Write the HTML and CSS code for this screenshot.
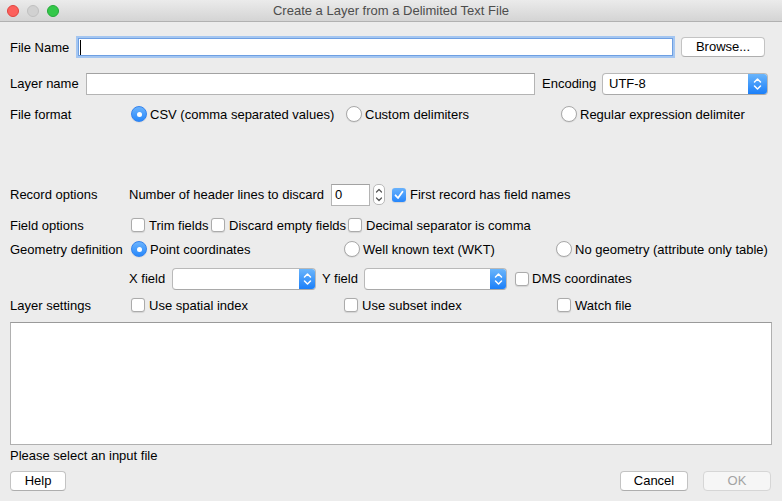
FILE: index.html
```html
<!DOCTYPE html>
<html>
<head>
<meta charset="utf-8">
<link rel="stylesheet" href="styles.css">
</head>
<body>
<div class="window">
  <div class="titlebar">
    <div class="lights">
      <span class="light red"></span>
      <span class="light gray"></span>
      <span class="light green"></span>
    </div>
    <div class="title">Create a Layer from a Delimited Text File</div>
  </div>

  <div class="content">
    <div class="row r1">
      <span class="lbl" style="width:68px">File Name</span>
      <div class="input focus fname"><span class="caret"></span></div>
      <button class="btn browse">Browse...</button>
    </div>

    <div class="row r2">
      <span class="lbl" style="width:76px">Layer name</span>
      <div class="input lname"></div>
      <span class="lbl enc">Encoding</span>
      <div class="combo encsel">
        <span class="combo-text">UTF-8</span>
        <span class="combo-arrow"><svg width="9" height="14" viewBox="0 0 9 14"><path d="M1.5 5 L4.5 2 L7.5 5 M1.5 9 L4.5 12 L7.5 9" fill="none" stroke="#fff" stroke-width="1.5" stroke-linecap="round" stroke-linejoin="round"/></svg></span>
      </div>
    </div>

    <div class="row r3">
      <span class="lbl" style="width:121px">File format</span>
      <span class="opt" style="width:215px"><span class="radio on"></span>CSV (comma separated values)</span>
      <span class="opt" style="width:215px"><span class="radio"></span>Custom delimiters</span>
      <span class="opt"><span class="radio"></span>Regular expression delimiter</span>
    </div>

    <div class="row r4">
      <span class="lbl" style="width:119px">Record options</span>
      <span class="lbl" style="width:202px">Number of header lines to discard</span>
      <div class="input spin">0</div>
      <span class="stepper"><svg width="10" height="18" viewBox="0 0 10 18"><path d="M2.5 6 L5 3.5 L7.5 6 M2.5 12 L5 14.5 L7.5 12" fill="none" stroke="#555" stroke-width="1.2" stroke-linecap="round" stroke-linejoin="round"/></svg></span>
      <span class="opt first"><span class="check on"><svg width="14" height="14" viewBox="0 0 14 14"><path d="M3.5 7.3 L6 10 L10.5 3.8" fill="none" stroke="#fff" stroke-width="1.8" stroke-linecap="round" stroke-linejoin="round"/></svg></span>First record has field names</span>
    </div>

    <div class="row r5">
      <span class="lbl" style="width:121px">Field options</span>
      <span class="opt" style="width:80px"><span class="check"></span>Trim fields</span>
      <span class="opt" style="width:137px"><span class="check"></span>Discard empty fields</span>
      <span class="opt"><span class="check"></span>Decimal separator is comma</span>
    </div>

    <div class="row r6">
      <span class="lbl" style="width:121px">Geometry definition</span>
      <span class="opt" style="width:213px"><span class="radio on"></span>Point coordinates</span>
      <span class="opt" style="width:212px"><span class="radio"></span>Well known text (WKT)</span>
      <span class="opt"><span class="radio"></span>No geometry (attribute only table)</span>
    </div>

    <div class="row r7">
      <span class="lbl" style="width:43px">X field</span>
      <div class="combo xsel">
        <span class="combo-text"></span>
        <span class="combo-arrow"><svg width="9" height="14" viewBox="0 0 9 14"><path d="M1.5 5 L4.5 2 L7.5 5 M1.5 9 L4.5 12 L7.5 9" fill="none" stroke="#fff" stroke-width="1.5" stroke-linecap="round" stroke-linejoin="round"/></svg></span>
      </div>
      <span class="lbl ylbl">Y field</span>
      <div class="combo ysel">
        <span class="combo-text"></span>
        <span class="combo-arrow"><svg width="9" height="14" viewBox="0 0 9 14"><path d="M1.5 5 L4.5 2 L7.5 5 M1.5 9 L4.5 12 L7.5 9" fill="none" stroke="#fff" stroke-width="1.5" stroke-linecap="round" stroke-linejoin="round"/></svg></span>
      </div>
      <span class="opt dms"><span class="check"></span>DMS coordinates</span>
    </div>

    <div class="row r8">
      <span class="lbl" style="width:121px">Layer settings</span>
      <span class="opt" style="width:213px"><span class="check"></span>Use spatial index</span>
      <span class="opt" style="width:213px"><span class="check"></span>Use subset index</span>
      <span class="opt"><span class="check"></span>Watch file</span>
    </div>

    <div class="textbox"></div>

    <div class="status">Please select an input file</div>

    <div class="row buttons">
      <button class="btn help">Help</button>
      <span class="spacer"></span>
      <button class="btn cancel">Cancel</button>
      <button class="btn ok" disabled>OK</button>
    </div>
  </div>
</div>
</body>
</html>
```
FILE: styles.css
```css
* { box-sizing: border-box; }
html, body { margin: 0; padding: 0; }
body {
  width: 782px;
  height: 501px;
  overflow: hidden;
  background: #ececec;
  font-family: "Liberation Sans", Arial, sans-serif;
  font-size: 13px;
  color: #000;
}
.window { width: 782px; height: 501px; background: #ececec; }

.titlebar {
  position: relative;
  height: 22px;
  background: linear-gradient(#ebebeb, #d4d4d4);
  border-bottom: 1px solid #b1b1b1;
  display: flex;
  align-items: center;
}
.lights { display: flex; gap: 8px; padding-left: 7px; position: relative; z-index: 1; }
.light { width: 12px; height: 12px; border-radius: 50%; display: block; }
.red { background: #fc605c; border: 1px solid #e0443f; }
.gray { background: #d1d1d1; border: 1px solid #c0c0c0; }
.green { background: #34c84a; border: 1px solid #25a93a; }
.title {
  position: absolute;
  left: 0; right: 0; top: 0;
  line-height: 22px;
  text-align: center;
  color: #4d4d4d;
  font-size: 13px;
}

.content { padding: 0 10px; display: flex; flex-direction: column; }
.row { display: flex; align-items: center; white-space: nowrap; }
.lbl { display: inline-block; flex: none; }

.r1 { margin-top: 13px; height: 24px; }
.r2 { margin-top: 13px; height: 23px; }
.r3 { margin-top: 9px; height: 20px; }
.r4 { margin-top: 59px; height: 23px; }
.r5 { margin-top: 9px; height: 20px; }
.r6 { margin-top: 4px; height: 20px; }
.r7 { margin-top: 8px; height: 23px; padding-left: 119px; }
.r8 { margin-top: 5px; height: 20px; }

.input {
  flex: none;
  height: 22px;
  background: #fff;
  border: 1px solid #b4b4b4;
  border-top-color: #a2a2a2;
}
.input.focus {
  border: 1px solid #6e9fe2;
  box-shadow: 0 0 0 2px #a4c6f1;
  height: 18px;
  display: flex;
  align-items: center;
  padding-left: 1px;
}
.fname { width: 595px; }
.caret { width: 1px; height: 15px; background: #000; display: block; }
.lname { width: 449px; }
.enc { margin-left: 7px; width: 60px; }

.btn {
  flex: none;
  font-family: "Liberation Sans", Arial, sans-serif;
  font-size: 13px;
  color: #000;
  height: 20px;
  background: #fff;
  border: 1px solid #c3c3c3;
  border-bottom-color: #aeaeae;
  border-radius: 4px;
  padding: 0;
  line-height: 18px;
  text-align: center;
}
.browse { width: 84px; margin-left: 8px; }

.combo {
  flex: none;
  height: 22px;
  background: #fff;
  border: 1px solid #b9b9b9;
  border-bottom-color: #a9a9a9;
  border-radius: 4px;
  display: flex;
  align-items: center;
  overflow: hidden;
}
.combo-text { flex: 1; padding-left: 6px; }
.combo-arrow {
  width: 16px;
  align-self: stretch;
  background: linear-gradient(#6ab5fb, #1b7ff9);
  display: flex;
  align-items: center;
  justify-content: center;
}
.encsel { width: 166px; }
.encsel .combo-arrow { width: 19px; }
.xsel { width: 144px; }
.ysel { width: 143px; }
.ylbl { margin-left: 6px; width: 42px; }
.dms { margin-left: 8px; }

.opt { display: flex; align-items: center; flex: none; }
.radio {
  width: 16px; height: 16px;
  border-radius: 50%;
  background: #fff;
  border: 1px solid #a9a9a9;
  box-shadow: 0 0.5px 1px rgba(0,0,0,0.12);
  margin-right: 3px;
  flex: none;
  position: relative;
}
.radio.on {
  background: linear-gradient(#6bb3fd, #2788fb);
  border-color: #3383ef;
}
.radio.on::after {
  content: "";
  position: absolute;
  left: 4.5px; top: 4.5px;
  width: 5px; height: 5px;
  border-radius: 50%;
  background: #fff;
}
.check {
  width: 14px; height: 14px;
  border-radius: 3px;
  background: #fff;
  border: 1px solid #ababab;
  box-shadow: 0 0.5px 1px rgba(0,0,0,0.1);
  margin-right: 4px;
  flex: none;
  display: flex;
}
.check.on {
  background: linear-gradient(#69b2fc, #2686fb);
  border: none;
}
.dms .check { margin-right: 3px; }

.spin { width: 39px; padding-left: 3px; line-height: 20px; }
.stepper {
  flex: none;
  width: 12px; height: 21px;
  margin-left: 3px;
  border: 1px solid #b9b9b9;
  border-radius: 5px;
  background: #fff;
  display: flex;
  align-items: center;
  justify-content: center;
}
.first { margin-left: 7px; }

.textbox {
  margin-top: 7px;
  width: 762px;
  height: 123px;
  background: #fff;
  border: 1px solid #b0b0b0;
  border-top-color: #9a9a9a;
}
.status { margin-top: 3px; height: 16px; line-height: 16px; }
.buttons { margin-top: 6px; height: 21px; }
.help { width: 56px; }
.spacer { flex: 1; }
.cancel { width: 68px; }
.ok {
  width: 68px;
  margin-left: 15px;
  margin-right: 1px;
  background: #f6f6f6;
  color: #a3a3a3;
  border-color: #d6d6d6;
}
```
